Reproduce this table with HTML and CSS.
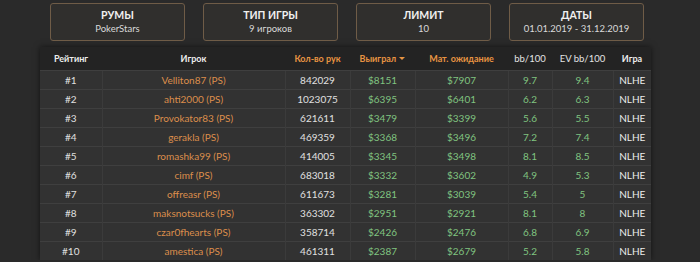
FILE: index.html
```html
<!DOCTYPE html>
<html lang="ru">
<head>
<meta charset="utf-8">
<link rel="stylesheet" href="styles.css">
</head>
<body>
<div class="filters">
  <div class="card"><div class="card-title">РУМЫ</div><div class="card-sub">PokerStars</div></div>
  <div class="card"><div class="card-title">ТИП ИГРЫ</div><div class="card-sub">9 игроков</div></div>
  <div class="card"><div class="card-title">ЛИМИТ</div><div class="card-sub">10</div></div>
  <div class="card"><div class="card-title">ДАТЫ</div><div class="card-sub">01.01.2019 - 31.12.2019</div></div>
</div>
<table class="stats">
  <colgroup>
    <col class="c-rank"><col class="c-player"><col class="c-hands"><col class="c-won"><col class="c-ev"><col class="c-bb"><col class="c-evbb"><col class="c-game">
  </colgroup>
  <thead>
    <tr>
      <th>Рейтинг</th><th>Игрок</th><th class="hl">Кол-во рук</th><th class="hl">Выиграл <span class="caret"></span></th><th class="hl">Мат. ожидание</th><th class="light">bb/100</th><th class="light">EV bb/100</th><th>Игра</th>
    </tr>
  </thead>
  <tbody>
    <tr><td>#1</td><td class="pl">Velliton87 (PS)</td><td>842029</td><td class="g">$8151</td><td class="g">$7907</td><td class="g">9.7</td><td class="g">9.4</td><td class="gm">NLHE</td></tr>
    <tr><td>#2</td><td class="pl">ahti2000 (PS)</td><td>1023075</td><td class="g">$6395</td><td class="g">$6401</td><td class="g">6.2</td><td class="g">6.3</td><td class="gm">NLHE</td></tr>
    <tr><td>#3</td><td class="pl">Provokator83 (PS)</td><td>621611</td><td class="g">$3479</td><td class="g">$3399</td><td class="g">5.6</td><td class="g">5.5</td><td class="gm">NLHE</td></tr>
    <tr><td>#4</td><td class="pl">gerakla (PS)</td><td>469359</td><td class="g">$3368</td><td class="g">$3496</td><td class="g">7.2</td><td class="g">7.4</td><td class="gm">NLHE</td></tr>
    <tr><td>#5</td><td class="pl">romashka99 (PS)</td><td>414005</td><td class="g">$3345</td><td class="g">$3498</td><td class="g">8.1</td><td class="g">8.5</td><td class="gm">NLHE</td></tr>
    <tr><td>#6</td><td class="pl">cimf (PS)</td><td>683018</td><td class="g">$3332</td><td class="g">$3602</td><td class="g">4.9</td><td class="g">5.3</td><td class="gm">NLHE</td></tr>
    <tr><td>#7</td><td class="pl">offreasr (PS)</td><td>611673</td><td class="g">$3281</td><td class="g">$3039</td><td class="g">5.4</td><td class="g">5</td><td class="gm">NLHE</td></tr>
    <tr><td>#8</td><td class="pl">maksnotsucks (PS)</td><td>363302</td><td class="g">$2951</td><td class="g">$2921</td><td class="g">8.1</td><td class="g">8</td><td class="gm">NLHE</td></tr>
    <tr><td>#9</td><td class="pl">czar0fhearts (PS)</td><td>358714</td><td class="g">$2426</td><td class="g">$2476</td><td class="g">6.8</td><td class="g">6.9</td><td class="gm">NLHE</td></tr>
    <tr><td>#10</td><td class="pl">amestica (PS)</td><td>461311</td><td class="g">$2387</td><td class="g">$2679</td><td class="g">5.2</td><td class="g">5.8</td><td class="gm">NLHE</td></tr>
  </tbody>
</table>
</body>
</html>
```
FILE: styles.css
```css
html, body {
  margin: 0;
  padding: 0;
  background: #2a2a2a;
  font-family: Lato, "Open Sans", "DejaVu Sans", sans-serif;
  color: #e6e6e6;
  overflow: hidden;
}
.filters {
  display: flex;
  gap: 18px;
  padding: 3px 0 0 50px;
}
.card {
  width: 135px;
  height: 38px;
  box-sizing: border-box;
  border: 1px solid #6f5c47;
  border-radius: 3px;
  background: #302f2d;
  display: flex;
  flex-direction: column;
  align-items: center;
  justify-content: center;
  line-height: 13px;
}
.card-title {
  font-size: 10.5px;
  font-weight: 700;
  color: #f0f0f0;
}
.card-sub {
  font-size: 9.5px;
  color: #dadada;
}
.stats {
  margin: 6px 0 0 40px;
  width: 611px;
  border-collapse: collapse;
  table-layout: fixed;
  background: #323232;
  box-shadow: 0 0 6px rgba(0, 0, 0, 0.55);
}
.c-rank { width: 62px; }
.c-player { width: 183px; }
.c-hands { width: 65px; }
.c-won { width: 65px; }
.c-ev { width: 93px; }
.c-bb { width: 44px; }
.c-evbb { width: 61px; }
.c-game { width: 38px; }
.stats th {
  background: #232323;
  height: 23px;
  padding: 0;
  font-weight: 700;
  color: #ececec;
  text-align: center;
  font-size: 9px;
}
.stats th.hl { color: #e89442; }
.stats th.light { font-weight: 400; color: #e4e4e4; font-size: 9.5px; }
.caret {
  display: inline-block;
  width: 0;
  height: 0;
  border-left: 3px solid transparent;
  border-right: 3px solid transparent;
  border-top: 3px solid #e89442;
  vertical-align: 2px;
  margin-left: 1px;
}
.stats td {
  height: 18px;
  padding: 0;
  text-align: center;
  border-top: 1px solid #3f3f3f;
  border-left: 1px solid #3b3b3b;
  color: #e0e0e0;
  font-size: 10px;
}
.stats td:first-child { border-left: none; }
.stats td.pl { color: #dc8e4c; }
.stats td.g { color: #80c480; }
.stats td.gm { color: #ececec; }
```
